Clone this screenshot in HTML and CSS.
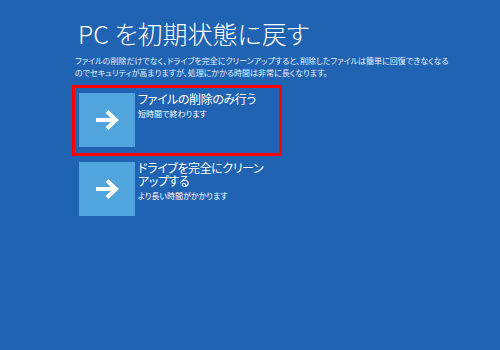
FILE: index.html
```html
<!DOCTYPE html>
<html lang="ja">
<head>
<meta charset="utf-8">
<title>PC を初期状態に戻す</title>
<link rel="stylesheet" href="styles.css">
</head>
<body>
  <main class="page">
    <h1 class="heading">PC を初期状態に戻す</h1>
    <p class="desc">ファイルの削除だけでなく、ドライブを完全にクリーンアップすると、削除したファイルは簡単に回復できなくなる<br>のでセキュリティが高まりますが、処理にかかる時間は非常に長くなります。</p>

    <!-- Options -->
    <ul class="options">
      <li class="option is-selected">
        <div class="tile">
          <svg width="26" height="22" viewBox="0 0 26 22"><path d="M2 11H22M13 2.5L22 11L13 19.5" fill="none" stroke="#fff" stroke-width="4"/></svg>
        </div>
        <div class="label">
          <div class="label-title">ファイルの削除のみ行う</div>
          <div class="label-sub">短時間で終わります</div>
        </div>
      </li>
      <li class="option">
        <div class="tile">
          <svg width="26" height="22" viewBox="0 0 26 22"><path d="M2 11H22M13 2.5L22 11L13 19.5" fill="none" stroke="#fff" stroke-width="4"/></svg>
        </div>
        <div class="label">
          <div class="label-title">ドライブを完全にクリーン<br>アップする</div>
          <div class="label-sub">より長い時間がかかります</div>
        </div>
      </li>
    </ul>
  </main>
</body>
</html>
```

FILE: styles.css
```css
/* Page */
body {
  margin: 0;
  height: 350px;
  background-color: #1f63b2;
  color: #ffffff;
  font-family: "Noto Sans CJK JP", "Noto Sans", sans-serif;
  font-feature-settings: "palt";
}

.page {
  padding: 18px 0 0 75px;
}

.heading {
  margin: 0 0 0 3px;
  font-size: 25px;
  font-weight: 300;
  line-height: 30px;
}

.desc {
  margin: 7px 0 0;
  font-size: 8px;
  line-height: 12px;
  color: #e8f0fa;
}

/* Options */
.options {
  list-style: none;
  margin: 9px 0 0;
  padding: 0;
  display: flex;
  flex-direction: column;
  gap: 4px;
}

.option {
  width: 196px;
  padding: 5px 4px 6px;
  display: flex;
  gap: 3px;
}

.option.is-selected {
  outline: 3px solid #ff0000;
}

.tile {
  width: 56px;
  height: 54px;
  flex: none;
  background-color: #4fa5dc;
  display: flex;
  align-items: center;
  justify-content: center;
}

.label {
  margin-top: -1px;
  white-space: nowrap;
}

.label-title {
  font-size: 12px;
  line-height: 13px;
  letter-spacing: -0.4px;
}

.label-sub {
  margin-top: 3px;
  font-size: 8px;
  line-height: 12px;
}
```
